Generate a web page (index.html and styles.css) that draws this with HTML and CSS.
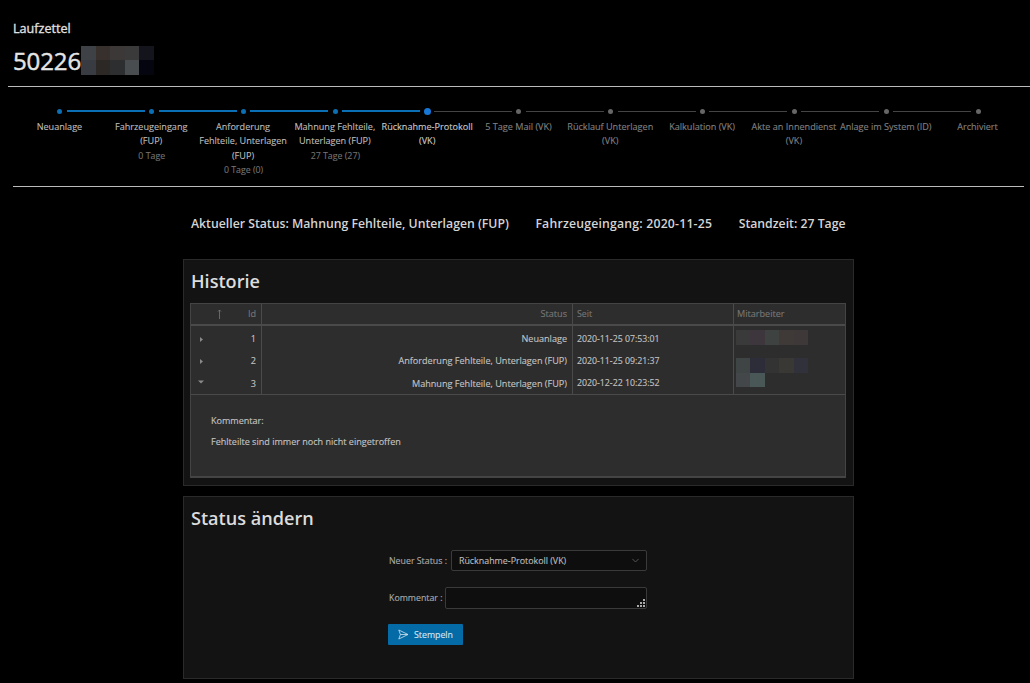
FILE: index.html
```html
<!DOCTYPE html>
<html lang="de">
<head>
<meta charset="utf-8">
<title>Laufzettel</title>
<link rel="stylesheet" href="styles.css">
</head>
<body>
<header class="head">
  <div class="head-label">Laufzettel</div>
  <div class="head-title"><span>50226</span>
    <div class="pix pix-head">
      <i class="h1"></i><i class="h2"></i><i class="h3"></i><i class="h4"></i><i class="h5"></i>
      <i class="h6"></i><i class="h7"></i><i class="h8"></i><i class="h9"></i><i class="h10"></i>
    </div>
  </div>
</header>
<hr class="rule-top">
<ol class="steps">
  <li class="step done first"><div class="track"><b></b></div><p>Neuanlage</p></li>
  <li class="step done"><div class="track"><b></b></div><p>Fahrzeugeingang (FUP)</p><small>0 Tage</small></li>
  <li class="step done"><div class="track"><b></b></div><p>Anforderung Fehlteile, Unterlagen (FUP)</p><small>0 Tage (0)</small></li>
  <li class="step done"><div class="track"><b></b></div><p>Mahnung Fehlteile, Unterlagen (FUP)</p><small>27 Tage (27)</small></li>
  <li class="step current"><div class="track"><b></b></div><p>Rücknahme-Protokoll (VK)</p></li>
  <li class="step"><div class="track"><b></b></div><p>5 Tage Mail (VK)</p></li>
  <li class="step"><div class="track"><b></b></div><p>Rücklauf Unterlagen (VK)</p></li>
  <li class="step"><div class="track"><b></b></div><p>Kalkulation (VK)</p></li>
  <li class="step"><div class="track"><b></b></div><p>Akte an Innendienst (VK)</p></li>
  <li class="step"><div class="track"><b></b></div><p>Anlage im System (ID)</p></li>
  <li class="step"><div class="track"><b></b></div><p>Archiviert</p></li>
</ol>
<hr class="rule-bottom">
<div class="summary">
  <span>Aktueller Status: Mahnung Fehlteile, Unterlagen (FUP)</span>
  <span class="wide">Fahrzeugeingang: 2020-11-25</span>
  <span>Standzeit: 27 Tage</span>
</div>
<main class="content">
  <section class="panel panel-history">
    <h2>Historie</h2>
    <div class="table">
      <div class="row row-head">
        <div class="cell c-id"><svg class="sort" width="5" height="10" viewBox="0 0 5 10"><path d="M2.5 1v9M1 2.5 2.5 1 4 2.5" fill="none" stroke="#777" stroke-width=".8"/></svg><span>Id</span></div>
        <div class="cell c-status">Status</div>
        <div class="cell c-since">Seit</div>
        <div class="cell c-user">Mitarbeiter</div>
      </div>
      <div class="tbody">
        <div class="row row-body row-first">
          <div class="cell c-id"><svg class="caret" width="5" height="5" viewBox="0 0 5 5"><path d="M1 0 4 2.5 1 5z" fill="#8a8a8a"/></svg><span>1</span></div>
          <div class="cell c-status">Neuanlage</div>
          <div class="cell c-since">2020-11-25 07:53:01</div>
          <div class="cell c-user"><div class="pix pix-user"><i class="u1"></i><i class="u2"></i><i class="u3"></i><i class="u4"></i><i class="u5"></i></div></div>
        </div>
        <div class="row row-body">
          <div class="cell c-id"><svg class="caret" width="5" height="5" viewBox="0 0 5 5"><path d="M1 0 4 2.5 1 5z" fill="#8a8a8a"/></svg><span>2</span></div>
          <div class="cell c-status">Anforderung Fehlteile, Unterlagen (FUP)</div>
          <div class="cell c-since">2020-11-25 09:21:37</div>
          <div class="cell c-user"></div>
        </div>
        <div class="row row-body row-last">
          <div class="cell c-id"><svg class="caret caret-open" width="6" height="4" viewBox="0 0 6 4"><path d="M0 .5h6L3 3.5z" fill="#8a8a8a"/></svg><span>3</span></div>
          <div class="cell c-status">Mahnung Fehlteile, Unterlagen (FUP)</div>
          <div class="cell c-since">2020-12-22 10:23:52</div>
          <div class="cell c-user"></div>
        </div>
        <div class="pix pix-user2 overlay">
          <i class="v1"></i><i class="v2"></i><i class="v3"></i><i class="v4"></i><i class="v5"></i>
          <i class="v6"></i><i class="v7"></i>
        </div>
      </div>
      <div class="detail">
        <p>Kommentar:</p>
        <p>Fehlteilte sind immer noch nicht eingetroffen</p>
      </div>
    </div>
  </section>
  <section class="panel panel-status">
    <h2>Status ändern</h2>
    <form class="form">
      <div class="field">
        <label>Neuer Status :</label>
        <div class="select">
          <span>Rücknahme-Protokoll (VK)</span>
          <svg width="7" height="5" viewBox="0 0 7 5"><path d="M.3.8 3.5 4 6.7.8" fill="none" stroke="#555" stroke-width="1"/></svg>
        </div>
      </div>
      <div class="field field-area">
        <label>Kommentar :</label>
        <div class="area">
          <svg class="grip" width="8" height="8" viewBox="0 0 8 8"><path d="M6 0h2v2H6zM3 3h2v2H3zM6 3h2v2H6zM0 6h2v2H0zM3 6h2v2H3zM6 6h2v2H6z" fill="#aaa"/></svg>
        </div>
      </div>
      <button type="button" class="stamp">
        <svg width="11" height="11" viewBox="0 0 11 11"><path d="M.8 1 10 5.5.8 10l1.6-4.5zM2.4 5.5H10" fill="none" stroke="#cfe3ef" stroke-width=".8" stroke-linejoin="round"/></svg>
        <span>Stempeln</span>
      </button>
    </form>
  </section>
</main>
</body>
</html>
```

FILE: styles.css
```css
* { box-sizing: border-box; }
html, body { margin: 0; padding: 0; }
body {
  width: 1030px;
  height: 683px;
  overflow: hidden;
  background: #000;
  color: #c8c8c8;
  font-family: "Open Sans", "Noto Sans", sans-serif;
  font-size: 9.1px;
  -webkit-text-stroke: .12px;
}
.head { padding: 21px 0 0 13px; height: 86px; }
.head-label { font-size: 12.6px; line-height: 16px; color: #e2e2e2; -webkit-text-stroke: .3px; }
.head-title { display: flex; align-items: center; margin-top: 8px; height: 30px; font-size: 24px; color: #e4e4e4; letter-spacing: -.1px; -webkit-text-stroke: .45px; }
.pix { display: grid; }
.pix i { display: block; }
.pix-head { grid-template-columns: repeat(5, 14.5px); grid-auto-rows: 14.5px; margin-left: 0; }
.h1 { background: #3e4145; } .h2 { background: #37302c; } .h3 { background: #3c3838; } .h4 { background: #3a3a3a; } .h5 { background: #14141c; }
.h6 { background: #383c42; } .h7 { background: #2c2826; } .h8 { background: #2d2e30; } .h9 { background: #4a4d50; } .h10 { background: #05050f; }
hr { border: 0; margin: 0; height: 1px; background: #bbb; }
.rule-top { margin-left: 8px; height: 1px; }
.steps { list-style: none; margin: 0; padding: 20px 6px 0 14px; display: grid; grid-template-columns: repeat(11, 91.82px); height: 99px; }
.step { text-align: center; color: #808080; min-width: 0; }
.step p { margin: 0 0 0 -1px; line-height: 14.4px; }
.step small { display: block; font-size: 8.8px; line-height: 14.4px; color: #737373; }
.track { position: relative; height: 8px; margin-bottom: 5px; display: flex; justify-content: center; align-items: center; }
.track b { width: 5px; height: 5px; border-radius: 50%; background: #666; position: relative; z-index: 1; }
.track::before { content: ""; position: absolute; top: 3.5px; right: calc(50% + 7px); width: 78px; height: 1px; background: #444; }
.first .track::before { display: none; }
.done .track b { background: #0b6fb5; }
.done p { color: #bcbcbc; }
.done .track::before, .current .track::before { background: #0b6fb5; height: 1.3px; top: 3.35px; }
.current .track b { width: 7px; height: 7px; background: #1777d6; }
.current p { color: #cacaca; margin: 1px -2px 0; }
.rule-bottom { margin: 0 6px 0 13px; }
.summary { display: flex; justify-content: flex-start; gap: 26.5px; padding: 28px 0 0 191px; height: 72px; font-size: 12.25px; font-weight: 600; color: #d4d4d4; line-height: 18px; -webkit-text-stroke: 0; }
.wide { letter-spacing: .2px; }
.content { display: flex; flex-direction: column; gap: 10px; padding-left: 183px; width: 854px; }
.panel { background: #131313; border: 1px solid #2a2a2a; padding: 0 7px 0 6px; }
.panel-history { height: 227px; }
.panel-status { height: 183px; }
.panel h2 { margin: 0 0 0 1px; font-size: 18.1px; font-weight: 600; line-height: 24px; color: #dcdcdc; padding-top: 9px; height: 43px; -webkit-text-stroke: 0; }
.table { background: #2d2d2d; border: 1px solid #444; border-bottom-width: 2px; height: 175px; }
.row { display: grid; grid-template-columns: 70px 311px 161px 1fr; }
.row-head { height: 22px; border-bottom: 2px solid #4a4a4a; color: #777; }
.tbody { position: relative; border-bottom: 1px solid #4a4a4a; height: 69px; }
.row-body { height: 22px; color: #c4c4c4; }
.row-first { height: 24px; }
.row-first .cell { padding-top: 2px; }
.row-last .cell { padding-top: 1px; }
.cell { padding: 0 5px; display: flex; align-items: center; line-height: 1; white-space: nowrap; }
.cell + .cell { border-left: 1px solid #4a4a4a; }
.c-id { justify-content: flex-end; }
.c-status { justify-content: flex-end; }
.c-since { font-size: 8.75px; padding-left: 4px; }
.sort { margin: 0 auto 0 21px; }
.caret { margin: 0 auto 0 3px; }
.caret-open { margin: -3px auto 0 2px; }
.c-user { padding-left: 2px; }
.row-head .c-user { padding-left: 3px; }
.pix-user { grid-template-columns: repeat(5, 14.4px); grid-auto-rows: 14.5px; margin-top: -3px; }
.u1 { background: #3a3a3a; } .u2 { background: #3d363c; } .u3 { background: #3e4241; } .u4 { background: #3f3a38; } .u5 { background: #3e3839; }
.overlay { position: absolute; left: 545px; top: 32px; grid-template-columns: repeat(5, 14.4px); grid-auto-rows: 14.7px; }
.v1 { background: #3f4445; } .v2 { background: #2d2d3a; } .v3 { background: #333; } .v4 { background: #3a3835; } .v5 { background: #30313a; }
.v6 { background: #44474a; } .v7 { background: #4a5757; }
.detail { padding: 20px 20px 0; color: #c4c4c4; font-size: 9.05px; }
.detail p { margin: 0 0 9px; line-height: 12px; }
.form { padding: 10px 0 0 198px; width: 457px; color: #ababab; font-size: 8.8px; }
.field { display: flex; align-items: center; }
.field label { margin-right: 4px; padding-left: 1px; white-space: nowrap; }
.select { flex: 1; height: 21px; background: #0e0e0e; border: 1px solid #3a3a3a; border-radius: 2px; display: flex; align-items: center; justify-content: space-between; padding: 0 7px 0 7px; color: #bdbdbd; font-size: 8.9px; }
.field-area { margin-top: 16px; align-items: flex-start; }
.field-area label { line-height: 22px; margin-right: 2px; }
.area { position: relative; flex: 1; height: 22px; background: #0e0e0e; border: 1px solid #3a3a3a; border-radius: 2px; }
.grip { position: absolute; right: 1px; bottom: 1px; }
.stamp { display: flex; align-items: center; gap: 5px; margin-top: 15px; width: 75px; height: 21px; padding: 0 0 0 10px; background: #056ba6; border: 0; border-radius: 1px; color: #d5e6f0; font: inherit; }
```
